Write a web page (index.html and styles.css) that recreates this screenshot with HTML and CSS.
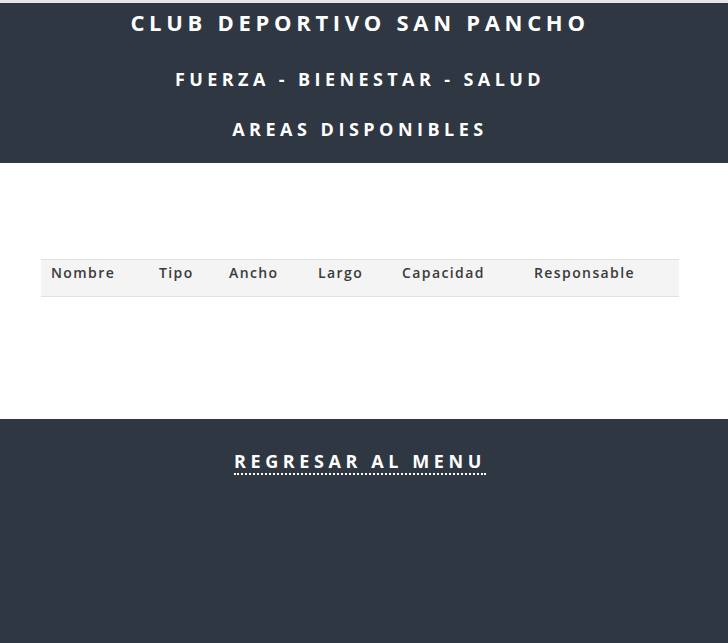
FILE: index.html
```html
<!DOCTYPE html>
<html lang="es">
<head>
<meta charset="utf-8">
<title>Areas disponibles</title>
<link rel="stylesheet" href="styles.css">
</head>
<body>
<div class="topline"></div>
<header class="hero">
  <h1 class="title">CLUB DEPORTIVO SAN PANCHO</h1>
  <h2 class="subtitle">FUERZA - BIENESTAR - SALUD</h2>
  <h3 class="section">AREAS DISPONIBLES</h3>
</header>
<main class="content">
  <table class="areas">
    <thead>
      <tr>
        <th class="c-nombre">Nombre</th>
        <th class="c-tipo">Tipo</th>
        <th class="c-ancho">Ancho</th>
        <th class="c-largo">Largo</th>
        <th class="c-cap">Capacidad</th>
        <th class="c-resp">Responsable</th>
      </tr>
    </thead>
    <tbody></tbody>
  </table>
</main>
<footer class="foot">
  <a class="back" href="#">REGRESAR AL MENU</a>
</footer>
</body>
</html>
```
FILE: styles.css
```css
* { box-sizing: border-box; }
html, body { margin: 0; padding: 0; }
body {
  font-family: "Open Sans", "DejaVu Sans", sans-serif;
  background: #fff;
  height: 643px;
  display: flex;
  flex-direction: column;
}
.topline {
  height: 3px;
  background: #e6e6e6;
}
.hero {
  background: #2e3742;
  color: #fff;
  text-align: center;
  height: 160px;
  padding: 6px 8px 0 0;
}
.title {
  margin: 0;
  font-size: 22px;
  font-weight: 700;
  letter-spacing: 4.7px;
  line-height: 26px;
}
.subtitle {
  margin: 32px 0 0;
  font-size: 18px;
  font-weight: 700;
  letter-spacing: 4.4px;
  line-height: 24px;
}
.section {
  margin: 26px 0 0;
  font-size: 18px;
  font-weight: 700;
  letter-spacing: 4.5px;
  line-height: 24px;
}
.content {
  height: 256px;
  padding: 96px 8px 0 0;
}
.areas {
  width: 638px;
  margin: 0 auto;
  border-collapse: collapse;
  table-layout: fixed;
}
.areas th {
  height: 37px;
  background: #f4f4f4;
  border-top: 1px solid #e2e2e2;
  border-bottom: 1px solid #e2e2e2;
  text-align: left;
  vertical-align: top;
  font-size: 14px;
  font-weight: 600;
  letter-spacing: 1.4px;
  color: #3a3a3a;
  padding: 3px 10px 0;
  line-height: 19px;
}
.c-nombre { width: 108px; }
.c-tipo { width: 70px; }
.c-ancho { width: 89px; }
.c-largo { width: 84px; }
.c-cap { width: 132px; }
.c-resp { width: 155px; }
.foot {
  flex: 1;
  background: #2e3742;
  text-align: center;
  padding: 30px 8px 0 0;
}
.back {
  color: #fff;
  text-decoration: none;
  font-size: 18px;
  font-weight: 700;
  letter-spacing: 4.6px;
  border-bottom: 2px dotted #fff;
  line-height: 24px;
}
```
